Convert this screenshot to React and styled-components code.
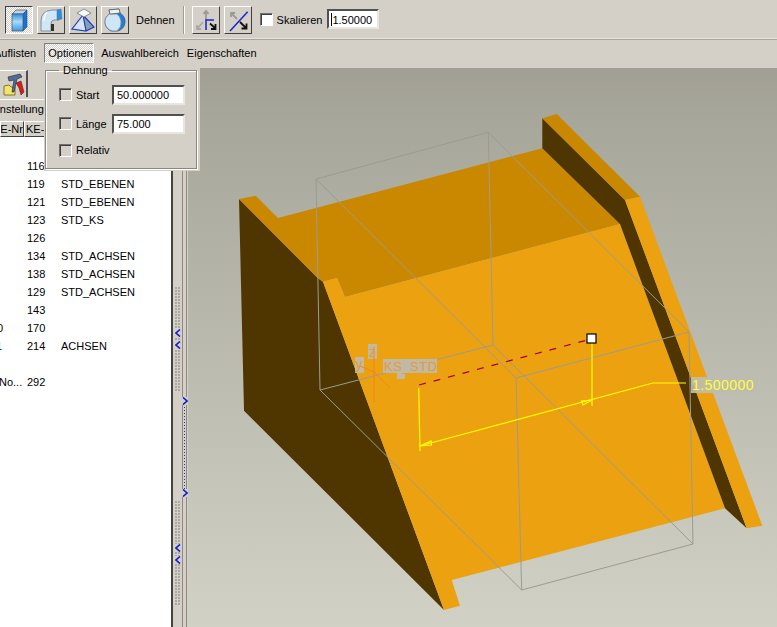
import React from 'react';
import styled, { createGlobalStyle } from 'styled-components';

const Global = createGlobalStyle`
    html, body {
        margin: 0;
        padding: 0;
        overflow: hidden;
    }
    #root {
        width: 777px;
        height: 627px;
    }
`;

const dither = 'repeating-conic-gradient(#fff 0 25%, #d4d0c8 0 50%) 0 0 / 2px 2px';

const Screen = styled.div`
    width: 777px;
    height: 627px;
    background-color: #d4d0c8;
    display: flex;
    flex-direction: column;
    font-family: "Liberation Sans", Arial, sans-serif;
    font-size: 11px;
    color: #000;
    overflow: hidden;
`;

const Toolbar = styled.div`
    height: 38px;
    padding: 0 0 0 5px;
    display: flex;
    align-items: center;
    border-bottom: 1px solid #e6e3dc;
    box-shadow: 0 1px 0 #a8a59d;
    margin-bottom: 2px;
`;

const ToolButton = styled.div`
    width: 28px;
    height: 28px;
    box-sizing: border-box;
    margin-right: ${p => p.$gap || 4}px;
    margin-top: 2px;
    background: ${p => (p.$active ? dither : '#d4d0c8')};
    border: 1px solid;
    border-color: ${p => (p.$active ? '#404040 #fff #fff #404040' : '#fff #404040 #404040 #fff')};
    display: flex;
    align-items: center;
    justify-content: center;

    & > svg {
        display: block;
    }
`;

const ToolLabel = styled.span`
    margin: 2px 8px 0 3px;
`;

const Separator = styled.div`
    width: 1px;
    height: 28px;
    margin: 2px 7px 0 0;
    background: #a09c94;
    border-right: 1px solid #fff;
`;

const Check = styled.input.attrs({ type: 'checkbox', readOnly: true })`
    appearance: none;
    width: 13px;
    height: 13px;
    margin: 0;
    flex: none;
    box-sizing: border-box;
    background: #d4d0c8;
    border: 1px solid;
    border-color: #707070 #fff #fff #707070;
    box-shadow: inset 1px 1px 0 #404040;
`;

const ScaleCheck = styled(Check)`
    margin-top: 1px;
    background: #fff;
`;

const ScaleLabel = styled.span`
    margin: 2px 5px 0 4px;
`;

const Field = styled.input.attrs({ readOnly: true })`
    box-sizing: border-box;
    width: ${p => p.$w}px;
    height: 20px;
    margin: 0;
    padding: 1px 0 0 3px;
    font: 11px "Liberation Sans", Arial, sans-serif;
    color: #000;
    outline: none;
    background: #fff;
    border: 2px solid;
    border-color: #505050 #e8e6e0 #e8e6e0 #505050;
`;

const ScaleField = styled(Field)`
    padding-left: 3px;
    background: linear-gradient(#000, #000) 2px 2px / 1px 13px no-repeat #fff;
`;

const MenuBar = styled.div`
    height: 27px;
    display: flex;
    align-items: flex-start;
    overflow: hidden;
`;

const MenuItem = styled.div`
    box-sizing: border-box;
    height: 20px;
    padding: 0 4px;
    margin: 2px 0 0 0;
    line-height: 20px;
    white-space: nowrap;
    ${p => p.$clip && 'margin-left: -10px; margin-right: 4px;'}
    ${p => p.$open && `
        background: ${dither};
        border: 1px solid;
        border-color: #808080 #fff #fff #808080;
        padding: 0 3px;
        width: 50px;
        margin-right: 3px;
        line-height: 18px;
    `}
`;

const Main = styled.div`
    position: relative;
    flex: 1;
    display: flex;
    min-height: 0;
`;

const LeftPanel = styled.div`
    width: 171px;
    flex: none;
    display: flex;
    flex-direction: column;
    background: #fff;
    overflow: hidden;
`;

const TabStrip = styled.div`
    height: 29px;
    padding-top: 2px;
    background: #d4d0c8;
    border-bottom: 1px solid #fff;
`;

const IconTab = styled.div`
    box-sizing: border-box;
    width: 28px;
    height: 27px;
    border-top: 1px solid #fff;
    border-right: 2px solid #505050;
    display: flex;
    align-items: center;
    justify-content: center;
`;

const SettingsBar = styled.div`
    height: 21px;
    background: #d4d0c8;
    line-height: 19px;
    white-space: nowrap;
    overflow: hidden;
    box-sizing: border-box;
`;

const ClippedText = styled.span`
    display: inline-block;
    margin-left: -10px;
`;

const HeaderRow = styled.div`
    display: flex;
    height: 16px;
    flex: none;
    background: #d4d0c8;
`;

const HeaderCell = styled.div`
    box-sizing: border-box;
    width: ${p => p.$w}px;
    flex: none;
    border: 1px solid;
    border-color: #fff #404040 #404040 #fff;
    line-height: 14px;
    overflow: hidden;
    white-space: nowrap;
    padding-left: ${p => p.$pad || 0}px;
`;

const Rows = styled.div`
    padding-top: 20px;
`;

const Row = styled.div`
    display: flex;
    height: 18px;
    line-height: 18px;
    white-space: nowrap;
`;

const KeyCell = styled.div`
    width: 27px;
    flex: none;
    overflow: hidden;
`;

const KeyText = styled.span`
    display: inline-block;
    margin-left: ${p => p.$shift || 0}px;
`;

const NumCell = styled.div`
    width: 34px;
    flex: none;
`;

const Splitter = styled.div`
    position: relative;
    width: 17px;
    flex: none;
    box-sizing: border-box;
    padding-top: 219px;
    background:
        linear-gradient(#8b8980, #8b8980) 11px 0 / 1px 100% no-repeat,
        linear-gradient(#8b8980, #8b8980) 15px 0 / 1px 100% no-repeat,
        linear-gradient(#46443f, #46443f) 0 0 / 2px 100% no-repeat,
        #d4d0c8;
    display: flex;
    flex-direction: column;
`;

const Grip = styled.div`
    width: 6px;
    height: ${p => p.$h}px;
    margin-left: 4px;
    padding-top: ${p => p.$top}px;
    box-sizing: border-box;
    background: radial-gradient(circle at 1px 1px, #aaa8a2 0.9px, transparent 1.1px) 0 0 / 3px 3px;
    display: flex;
    flex-direction: column;
    gap: 4px;
    align-items: center;

    & > svg {
        display: block;
        background: #d4d0c8;
    }
`;

const Run = styled.div`
    width: 5px;
    height: 100px;
    margin: 6px 0 4px 11px;
    display: flex;
    flex-direction: column;
    justify-content: space-between;
    align-items: center;
    background: radial-gradient(circle, #1a2fb0 0.7px, transparent 1px) 0 0 / 5px 3px repeat-y;

    & > svg {
        display: block;
        background: #d4d0c8;
    }
`;

const Viewport = styled.div`
    flex: 1;
    min-width: 0;
    background: linear-gradient(180deg, #a2a094 0%, #a8a79b 10%, #d2d1c6 100%);

    & > svg {
        display: block;
    }
`;

const Popup = styled.div`
    position: absolute;
    left: 44px;
    top: -4px;
    width: 156px;
    height: 107px;
    box-sizing: border-box;
    background: #d4d0c8;
    padding: 0 3px 2px 1px;
`;

const Group = styled.fieldset`
    height: 100%;
    box-sizing: border-box;
    margin: 0;
    padding: 3px 0 0 13px;
    border: 1px solid #8a8880;
    box-shadow: inset 1px 1px 0 #fff, 1px 1px 0 #fff;
    display: flex;
    flex-direction: column;
`;

const GroupTitle = styled.legend`
    padding: 0 4px;
    line-height: 13px;
`;

const OptionRow = styled.div`
    display: flex;
    align-items: center;
    height: ${p => p.$h}px;
`;

const OptionLabel = styled.span`
    width: 36px;
    flex: none;
    margin-left: 4px;
`;

function Chevron({ right }) {
    return (
        <svg width="6" height="8" viewBox="0 0 6 8">
            <path d={right ? 'M1 0.5 L5 4 L1 7.5' : 'M5 0.5 L1 4 L5 7.5'} fill="none" stroke="#1018d0" strokeWidth="1.6" />
        </svg>
    );
}

function BoxIcon() {
    return (
        <svg width="22" height="24" viewBox="0 0 22 24">
            <defs>
                <linearGradient id="boxFace" x1="0" x2="0" y1="0" y2="1">
                    <stop offset="0" stopColor="#2f8fe0" />
                    <stop offset="0.45" stopColor="#a8dcf6" />
                    <stop offset="1" stopColor="#3b97e2" />
                </linearGradient>
            </defs>
            <path d="M4 6 L8 2 L19 2 L15 6 Z" fill="#b9d5ec" stroke="#54606c" strokeWidth="0.8" />
            <path d="M15 6 L19 2 L19 19 L15 23 Z" fill="#1772d8" stroke="#2a4f80" strokeWidth="0.6" />
            <rect x="4" y="6" width="11" height="17" fill="url(#boxFace)" stroke="#54606c" strokeWidth="0.8" />
        </svg>
    );
}

function ElbowIcon() {
    return (
        <svg width="24" height="24" viewBox="0 0 24 24">
            <path d="M2 23 L2 13 Q2 3 13 2 L20 2 L20 12 L15 12 Q12 12 12 16 L12 23 Z" fill="#cfe6f7" stroke="#6d7d8c" strokeWidth="0.8" />
            <path d="M18 2 L22 1 L23 11 L18 12 Z" fill="#2a8ee6" stroke="#4a6c90" strokeWidth="0.5" />
            <path d="M12 23 L12 16 L15 16 L15 23 Z" fill="#30302c" />
            <path d="M8 4 Q5 7 5 13" fill="none" stroke="#fff" strokeWidth="1.4" />
        </svg>
    );
}

function PyramidIcon() {
    return (
        <svg width="24" height="24" viewBox="0 0 24 24">
            <path d="M12 7 L1 21 L15 23 L23 19 Z" fill="#d6e6f6" />
            <path d="M12 7 L15 23 L23 19 Z" fill="#8a9cb2" />
            <path d="M12 7 L1 21 L15 23 Z M12 7 L23 19 L15 23" fill="none" stroke="#1a3fc0" strokeWidth="1.2" />
            <path d="M6 5 L13 1 L20 5 L13 9 Z" fill="#f6f9fb" stroke="#767676" strokeWidth="0.8" />
        </svg>
    );
}

function VaseIcon() {
    return (
        <svg width="24" height="24" viewBox="0 0 24 24">
            <path d="M6 2 L16 1 L17 5 Q23 9 22 15 Q21 21 15 23 L8 23 Q2 20 2 14 Q2 8 7 6 Z" fill="#1f7de0" stroke="#485868" strokeWidth="0.7" />
            <path d="M6 6 Q1 10 2 15 Q3 21 9 23 L14 23 Q19 19 18 13 Q17 8 14 6 Z" fill="#cfe6f7" stroke="#6d7d8c" strokeWidth="0.7" />
            <path d="M6 2 L16 1 L17 5 L7 6 Z" fill="#eef4f9" stroke="#555" strokeWidth="0.7" />
        </svg>
    );
}

function MoveIcon() {
    return (
        <svg width="24" height="24" viewBox="0 0 24 24">
            <path d="M12 12 L12 3 M9.5 6 L12 3 L14.5 6" fill="none" stroke="#9a9a94" strokeWidth="1.8" />
            <path d="M9 14 L3 21 M3 17 L3 21 L7 21" fill="none" stroke="#a8a8a2" strokeWidth="1.8" />
            <path d="M12 22 L12 12 L20 12" fill="none" stroke="#1626c8" strokeWidth="1.5" />
            <path d="M16 15.5 L21 20 M21.5 16 L21.5 21 L17 21" fill="none" stroke="#111" strokeWidth="1.8" />
        </svg>
    );
}

function StretchIcon() {
    return (
        <svg width="24" height="24" viewBox="0 0 24 24">
            <path d="M21.7 3.7 L4 23" fill="none" stroke="#1626c8" strokeWidth="1.5" />
            <path d="M5 5 L11 11 M5 9 L5 5 L9 5" fill="none" stroke="#9a9a94" strokeWidth="1.8" />
            <path d="M14 14 L20 20 M20.5 15.5 L20.5 20.5 L15.5 20.5" fill="none" stroke="#111" strokeWidth="1.8" />
        </svg>
    );
}

function ToolsIcon() {
    return (
        <svg width="24" height="24" viewBox="0 0 24 24">
            <path d="M3 14 L8 13 L10 15 L14 15 L14 23 L3 23 Z" fill="#f2e468" stroke="#6a5a10" strokeWidth="0.8" />
            <path d="M7 5 L19 2 L21 5 L16 7 L13 20 L11 20 L13 8 L8 9 Z" fill="#4b6f9a" stroke="#222" strokeWidth="0.6" />
            <path d="M15 11 L20 9 L23 20 L20 23 L18 16 Z" fill="#e01818" stroke="#222" strokeWidth="0.5" />
        </svg>
    );
}

// page coordinates, the viewBox starts where the viewport does
function Model() {
    return (
        <svg width="100%" height="100%" viewBox="188 68 589 559">
            <polygon fill="#4f3600" points="239,199 317.7,278 323,281.7 444,610 244,410.7" />
            <polygon fill="#c98800" points="239,199 255.7,195.7 278,218 542.3,148.3 620,224 345,297 337,278 323,281.7 317.7,278" />
            <polygon fill="#eba110" points="323,281.7 337,278 345,297 620,224 725,508.3 451.7,580 460,605.7 444,610" />
            <polygon fill="#4f3600" points="542.3,118.3 625,200 746.7,528.3 725,508.3 620,224 542.3,148.3" />
            <polygon fill="#c98800" points="542.3,118.3 556.7,114 640,196.7 625,200" />
            <polygon fill="#eba110" points="625,200 640,196.7 762.3,525.7 746.7,528.3" />

            <g fill="none" stroke="#9b9b96" strokeWidth="1">
                <path d="M316 179 L488.3 132.3 L689 332 L516 378 Z" />
                <path d="M320 390 L493 345 L693 544 L521.7 590 Z" />
                <path d="M316 179 L320 390 M488.3 132.3 L493 345 M516 378 L521.7 590 M689 332 L693 544" />
            </g>

            <path d="M419 385 L591 339" fill="none" stroke="#a00030" strokeWidth="1.2" strokeDasharray="7 8" />
            <g fill="none" stroke="#ffff00" strokeWidth="1.2">
                <path d="M418.7 388 L420 451" />
                <path d="M592 342 L592 406" />
                <path d="M419.5 446 L653 383 L686 383" />
                <path d="M420 446 L431 441 L431.5 445 Z" />
                <path d="M592 400 L581.5 401 L583 405 Z" />
            </g>
            <rect x="587" y="334" width="9" height="9" fill="#fff" stroke="#000" strokeWidth="1.2" />

            <g fill="#bdbcb1" opacity="0.92">
                <rect x="383" y="359" width="54" height="14" />
                <rect x="355" y="357" width="9" height="16" />
                <rect x="368" y="344" width="9" height="15" />
                <rect x="397" y="373" width="8" height="6" />
                <rect x="691" y="377" width="66" height="16" />
            </g>
            <g fill="none" stroke="#f5861a" strokeWidth="1">
                <path d="M374 347 L374 402 M374 372 L360 366 M374 372 L390 388" />
            </g>
            <g fontFamily="'Liberation Sans', Arial, sans-serif" fill="#e8993a">
                <text x="384" y="370.5" fontSize="13" letterSpacing="0.5">KS_STD</text>
                <text x="355.5" y="369" fontSize="14">y</text>
                <text x="369" y="357" fontSize="14">z</text>
            </g>
            <text x="692" y="390" fontFamily="'Liberation Sans', Arial, sans-serif" fontSize="14" letterSpacing="0.45" fill="#ffff30">1.500000</text>
        </svg>
    );
}

const rows = [
    { nr: '119', name: 'STD_EBENEN' },
    { nr: '121', name: 'STD_EBENEN' },
    { nr: '123', name: 'STD_KS' },
    { nr: '126' },
    { nr: '134', name: 'STD_ACHSEN' },
    { nr: '138', name: 'STD_ACHSEN' },
    { nr: '129', name: 'STD_ACHSEN' },
    { nr: '143' },
    { key: '0', shift: -3, nr: '170' },
    { key: '1', shift: -4, nr: '214', name: 'ACHSEN' },
    {},
    { key: 'No...', shift: -1, nr: '292' },
];

function App() {
    return (
        <Screen>
            <Global />
            <Toolbar>
                <ToolButton $active><BoxIcon /></ToolButton>
                <ToolButton><ElbowIcon /></ToolButton>
                <ToolButton><PyramidIcon /></ToolButton>
                <ToolButton><VaseIcon /></ToolButton>
                <ToolLabel>Dehnen</ToolLabel>
                <Separator />
                <ToolButton><MoveIcon /></ToolButton>
                <ToolButton $gap={8}><StretchIcon /></ToolButton>
                <ScaleCheck />
                <ScaleLabel>Skalieren</ScaleLabel>
                <ScaleField $w={52} value="1.50000" />
            </Toolbar>
            <MenuBar>
                <MenuItem $clip>Auflisten</MenuItem>
                <MenuItem $open>Optionen</MenuItem>
                <MenuItem>Auswahlbereich</MenuItem>
                <MenuItem>Eigenschaften</MenuItem>
            </MenuBar>
            <Main>
                <LeftPanel>
                    <TabStrip>
                        <IconTab><ToolsIcon /></IconTab>
                    </TabStrip>
                    <SettingsBar><ClippedText>Einstellungen</ClippedText></SettingsBar>
                    <HeaderRow>
                        <HeaderCell $w={24}><KeyText $shift={-8}>KE-Nr.</KeyText></HeaderCell>
                        <HeaderCell $w={24} $pad={1}>KE-Id</HeaderCell>
                    </HeaderRow>
                    <Rows>
                        <Row>
                            <KeyCell />
                            <NumCell>116</NumCell>
                        </Row>
                        {rows.map((r, i) => (
                            <Row key={i}>
                                <KeyCell><KeyText $shift={r.shift}>{r.key}</KeyText></KeyCell>
                                <NumCell>{r.nr}</NumCell>
                                <div>{r.name}</div>
                            </Row>
                        ))}
                    </Rows>
                </LeftPanel>
                <Splitter>
                    <Grip $h={104} $top={42}>
                        <Chevron />
                        <Chevron />
                    </Grip>
                    <Run>
                        <Chevron right />
                        <Chevron right />
                    </Run>
                    <Grip $h={105} $top={43}>
                        <Chevron />
                        <Chevron />
                    </Grip>
                </Splitter>
                <Viewport><Model /></Viewport>
                <Popup>
                    <Group>
                        <GroupTitle>Dehnung</GroupTitle>
                        <OptionRow $h={29}>
                            <Check />
                            <OptionLabel>Start</OptionLabel>
                            <Field $w={73} value="50.000000" />
                        </OptionRow>
                        <OptionRow $h={29}>
                            <Check />
                            <OptionLabel>Länge</OptionLabel>
                            <Field $w={73} value="75.000" />
                        </OptionRow>
                        <OptionRow $h={24}>
                            <Check />
                            <OptionLabel>Relativ</OptionLabel>
                        </OptionRow>
                    </Group>
                </Popup>
            </Main>
        </Screen>
    );
}

export default App;
